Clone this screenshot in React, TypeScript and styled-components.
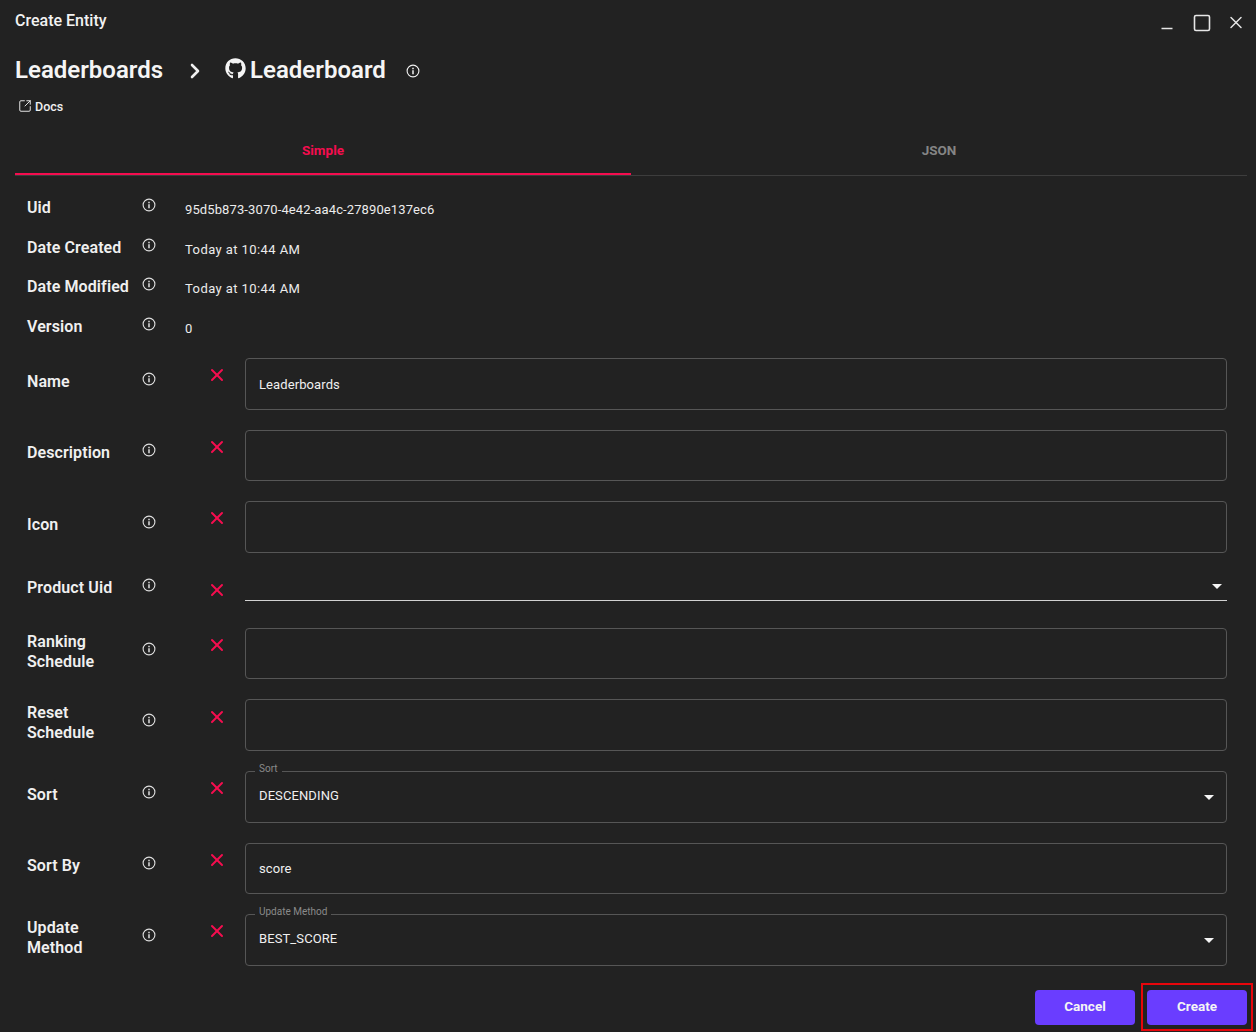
import styled, { createGlobalStyle } from 'styled-components'
import { ChevronRight, SquareArrowOutUpRight, X } from 'lucide-react'
import { FaGithub } from 'react-icons/fa'

const Global = createGlobalStyle`
  html, body {
    margin: 0;
    background: #222222;
  }
`

const Root = styled.div`
  position: relative;
  width: 1256px;
  height: 1032px;
  overflow: hidden;
  padding: 0 15px;
  box-sizing: border-box;
  background: #222222;
  color: #f2f2f2;
  font-family: Roboto, 'Liberation Sans', sans-serif;
`

const TitleBar = styled.header`
  display: flex;
  align-items: center;
  justify-content: space-between;
  height: 41px;
`

const Title = styled.div`
  font-size: 16px;
  font-weight: 500;
`

const WindowButtons = styled.div`
  display: flex;
  align-items: center;
  gap: 14.5px;
  margin-right: -5px;
  margin-top: 4px;
`

const IconBtn = styled.span`
  display: flex;
  width: 20px;
  height: 20px;
  align-items: center;
  justify-content: center;
  color: #e6e6e6;
`

const Crumbs = styled.div`
  display: flex;
  align-items: center;
  height: 40px;
  margin-top: 9px;
`

const CrumbText = styled.h1`
  margin: 0;
  font-size: 24px;
  font-weight: 600;
  color: #f5f5f5;
`

const CrumbArrow = styled.span`
  display: flex;
  margin: 2px 0 0 20px;
  color: #f0f0f0;
`

const GitIcon = styled.span`
  display: flex;
  margin: 0 4px 4px 18px;
  color: #f5f5f5;
`

const CrumbInfo = styled.span`
  display: flex;
  margin: 2px 0 0 20px;
`

const DocsLink = styled.a`
  display: flex;
  align-items: center;
  gap: 3px;
  height: 18px;
  margin: 7px 0 0 3px;
  font-size: 12.5px;
  font-weight: 500;
  color: #f0f0f0;
`

const Tabs = styled.nav`
  display: flex;
  height: 50px;
  margin: 11px -6px 0 0;
  border-bottom: 1px solid #3d3d3d;
  box-sizing: border-box;
`

const Tab = styled.div<{ $active?: boolean }>`
  flex: 1;
  display: flex;
  align-items: center;
  justify-content: center;
  font-size: 13.5px;
  font-weight: 700;
  color: ${(p) => (p.$active ? '#f50d4f' : '#858585')};
  border-bottom: 2px solid ${(p) => (p.$active ? '#f50d4f' : 'transparent')};
`

const InfoList = styled.section`
  margin: 12.3px 0 11.7px 12px;
`

const InfoRow = styled.div`
  display: flex;
  align-items: center;
  height: 39.5px;
`

const Label = styled.div`
  width: 107px;
  margin-right: 8px;
  flex: none;
  font-size: 16px;
  font-weight: 600;
  line-height: 20px;
  letter-spacing: 0.1px;
  color: #f0f0f0;
`

const HelpIcon = styled.span<{ $lift?: number }>`
  display: flex;
  flex: none;
  margin-bottom: ${(p) => p.$lift ?? 6}px;
  color: #e0e0e0;
`

const Value = styled.div<{ $wide?: boolean }>`
  margin: 3px 0 0 29px;
  font-size: 13px;
  letter-spacing: ${(p) => (p.$wide ? '0.42px' : '0.11px')};
  color: #ececec;
`

const FieldList = styled.section`
  display: flex;
  flex-direction: column;
  gap: 20px;
  margin: 0 14px 0 12px;
`

const FieldRow = styled.div<{ $short?: boolean }>`
  display: flex;
  align-items: center;
  height: ${(p) => (p.$short ? '35px' : '51.6px')};
`

const RowLabel = styled(Label)`
  margin-bottom: 4px;
`

const Remove = styled.span<{ $flat?: boolean }>`
  display: flex;
  flex: none;
  width: 20px;
  justify-content: center;
  margin: 0 18px 0 51px;
  margin-bottom: ${(p) => (p.$flat ? '0' : '17px')};
  color: #f50d4f;
`

const Box = styled.div`
  position: relative;
  flex: 1;
  height: 100%;
  display: flex;
  align-items: center;
  justify-content: space-between;
  box-sizing: border-box;
  padding: 1px 13px 0;
  border: 1px solid #565656;
  border-radius: 4px;
  font-size: 13px;
  letter-spacing: 0.1px;
  color: #f0f0f0;
`

const SelectBox = styled(Box)`
  padding: 0 12px 2px 13px;
`

const Legend = styled.span`
  position: absolute;
  top: -9px;
  left: 9px;
  padding: 0 4px;
  background: #222222;
  font-size: 10px;
  line-height: 12px;
  letter-spacing: 0;
  color: #8a8a8a;
`

const UnderlineSelect = styled.div`
  flex: 1;
  align-self: flex-start;
  height: 28px;
  display: flex;
  align-items: center;
  justify-content: flex-end;
  box-sizing: border-box;
  padding-right: 5px;
  border-bottom: 1px solid #d2d2d2;
`

const Caret = styled.span<{ $drop?: number }>`
  width: 0;
  height: 0;
  margin-top: ${(p) => p.$drop ?? 0}px;
  border-left: 5px solid transparent;
  border-right: 5px solid transparent;
  border-top: 5px solid #f5f5f5;
`

const Footer = styled.footer`
  display: flex;
  justify-content: flex-end;
  gap: 12px;
  margin: 24.4px -6px 0 0;
`

const Button = styled.button`
  width: 100px;
  height: 35px;
  padding: 0 0 3px;
  border: 0;
  border-radius: 4px;
  background: #6a3dff;
  color: #f5f5f5;
  font-family: inherit;
  font-size: 13.5px;
  font-weight: 700;
`

// red annotation drawn over the screenshot
const Highlight = styled.div`
  position: absolute;
  left: 1141px;
  top: 983px;
  width: 112px;
  height: 48px;
  box-sizing: border-box;
  border: 2px solid #e8060c;
  pointer-events: none;
`

function InfoGlyph() {
  return (
    <svg width="14" height="14" viewBox="0 0 14 14" fill="none" stroke="currentColor">
      <circle cx="7" cy="7" r="5.9" strokeWidth="1.1" />
      <path d="M7 6.3v3.9" strokeWidth="1.5" />
      <path d="M7 3.7v1.5" strokeWidth="1.5" />
    </svg>
  )
}

function Info({ lift }: { lift?: number }) {
  return (
    <HelpIcon $lift={lift}>
      <InfoGlyph />
    </HelpIcon>
  )
}

const infoRows = [
  ['Uid', '95d5b873-3070-4e42-aa4c-27890e137ec6'],
  ['Date Created', 'Today at 10:44 AM'],
  ['Date Modified', 'Today at 10:44 AM'],
  ['Version', '0'],
]

function Field({ label, children, short, flat }: { label: string; children?: React.ReactNode; short?: boolean; flat?: boolean }) {
  return (
    <FieldRow $short={short}>
      <RowLabel>{label}</RowLabel>
      <Info lift={10} />
      <Remove $flat={flat}>
        <X size={20} strokeWidth={2.4} />
      </Remove>
      {children}
    </FieldRow>
  )
}

export default function App() {
  return (
    <Root>
      <Global />
      <TitleBar>
        <Title>Create Entity</Title>
        <WindowButtons>
          <IconBtn>
            <svg width="14" height="14" viewBox="0 0 14 14"><path d="M1.5 12.5h11" stroke="currentColor" strokeWidth="1.5" /></svg>
          </IconBtn>
          <IconBtn>
            <svg width="18" height="18" viewBox="0 0 18 18" fill="none"><rect x="1.5" y="1.5" width="15" height="15" rx="1.5" stroke="currentColor" strokeWidth="1.6" /></svg>
          </IconBtn>
          <IconBtn>
            <X size={21} strokeWidth={1.8} />
          </IconBtn>
        </WindowButtons>
      </TitleBar>

      <Crumbs>
        <CrumbText>Leaderboards</CrumbText>
        <CrumbArrow>
          <ChevronRight size={24} strokeWidth={2.6} />
        </CrumbArrow>
        <GitIcon>
          <FaGithub size={21} />
        </GitIcon>
        <CrumbText>Leaderboard</CrumbText>
        <CrumbInfo>
          <InfoGlyph />
        </CrumbInfo>
      </Crumbs>

      <DocsLink>
        <SquareArrowOutUpRight size={14} strokeWidth={1.6} />
        Docs
      </DocsLink>

      <Tabs>
        <Tab $active>Simple</Tab>
        <Tab>JSON</Tab>
      </Tabs>

      <InfoList>
        {infoRows.map(([label, value]) => (
          <InfoRow key={label}>
            <Label>{label}</Label>
            <Info />
            <Value $wide={label.startsWith('Date')}>{value}</Value>
          </InfoRow>
        ))}
      </InfoList>

      <FieldList>
        <Field label="Name"><Box>Leaderboards</Box></Field>
        <Field label="Description"><Box /></Field>
        <Field label="Icon"><Box /></Field>
        <Field label="Product Uid" short flat>
          <UnderlineSelect><Caret /></UnderlineSelect>
        </Field>
        <Field label="Ranking Schedule"><Box /></Field>
        <Field label="Reset Schedule"><Box /></Field>
        <Field label="Sort">
          <SelectBox>
            <Legend>Sort</Legend>
            DESCENDING
            <Caret $drop={4} />
          </SelectBox>
        </Field>
        <Field label="Sort By"><Box>score</Box></Field>
        <Field label="Update Method">
          <SelectBox>
            <Legend>Update Method</Legend>
            BEST_SCORE
            <Caret $drop={4} />
          </SelectBox>
        </Field>
      </FieldList>

      <Footer>
        <Button>Cancel</Button>
        <Button>Create</Button>
      </Footer>

      <Highlight />
    </Root>
  )
}
